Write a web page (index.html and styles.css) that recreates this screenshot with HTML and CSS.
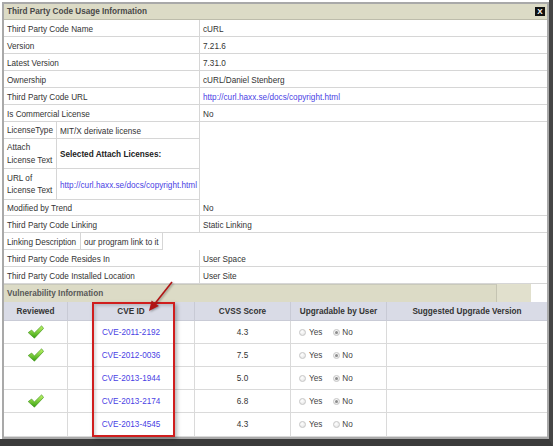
FILE: index.html
```html
<!DOCTYPE html>
<html lang="en">
<head>
    <meta charset="UTF-8">
    <title>Third Party Code Usage Information</title>
    <link rel="stylesheet" href="styles.css">
</head>
<body>
<div class="shot">
    <div class="dialog">
        <div class="titlebar">
            <span>Third Party Code Usage Information</span>
            <span class="close">X</span>
        </div>

        <div class="row"><div class="k">Third Party Code Name</div><div class="v">cURL</div></div>
        <div class="row"><div class="k">Version</div><div class="v">7.21.6</div></div>
        <div class="row"><div class="k">Latest Version</div><div class="v">7.31.0</div></div>
        <div class="row"><div class="k">Ownership</div><div class="v">cURL/Daniel Stenberg</div></div>
        <div class="row"><div class="k">Third Party Code URL</div><div class="v"><a href="#">http://curl.haxx.se/docs/copyright.html</a></div></div>
        <div class="row"><div class="k">Is Commercial License</div><div class="v">No</div></div>

        <div class="row group">
            <div class="sub">
                <div class="subrow"><div class="sk">LicenseType</div><div class="sv">MIT/X derivate license</div></div>
                <div class="subrow attach"><div class="sk">Attach<br>License Text</div><div class="sv"><b>Selected Attach Licenses:</b></div></div>
                <div class="subrow url"><div class="sk">URL of<br>License Text</div><div class="sv"><a href="#">http://curl.haxx.se/docs/copyright.html</a></div></div>
            </div>
            <div class="v"></div>
        </div>

        <div class="row short"><div class="k">Modified by Trend</div><div class="v">No</div></div>
        <div class="row"><div class="k">Third Party Code Linking</div><div class="v">Static Linking</div></div>
        <div class="row open"><div class="lk">Linking Description</div><div class="lv">our program link to it</div></div>
        <div class="row"><div class="k">Third Party Code Resides In</div><div class="v">User Space</div></div>
        <div class="row"><div class="k">Third Party Code Installed Location</div><div class="v">User Site</div></div>

        <div class="section">
            <div class="section-title">Vulnerability Information</div>
            <div class="section-tail"></div>
        </div>

        <div class="vrow vhead">
            <div>Reviewed</div>
            <div>CVE ID</div>
            <div>CVSS Score</div>
            <div>Upgradable by User</div>
            <div>Suggested Upgrade Version</div>
        </div>
        <div class="vrow">
            <div><svg class="check" viewBox="0 0 17 14"><defs><linearGradient id="g1" x1="0" y1="0" x2="0" y2="1"><stop offset="0" stop-color="#c2f76a"/><stop offset="1" stop-color="#35a00e"/></linearGradient></defs><path d="M1.2 7.6 L4.6 5 L7.4 7.9 L14.6 0.8 L16.6 3.4 L7.4 13.2 Z" fill="url(#g1)" stroke="#3d8e17" stroke-width="0.6"/></svg></div>
            <div><a href="#">CVE-2011-2192</a></div>
            <div>4.3</div>
            <div class="upg"><span class="opt"><span class="dot"></span>Yes</span><span class="opt"><span class="dot on"></span>No</span></div>
            <div></div>
        </div>
        <div class="vrow">
            <div><svg class="check" viewBox="0 0 17 14"><path d="M1.2 7.6 L4.6 5 L7.4 7.9 L14.6 0.8 L16.6 3.4 L7.4 13.2 Z" fill="url(#g1)" stroke="#3d8e17" stroke-width="0.6"/></svg></div>
            <div><a href="#">CVE-2012-0036</a></div>
            <div>7.5</div>
            <div class="upg"><span class="opt"><span class="dot"></span>Yes</span><span class="opt"><span class="dot on"></span>No</span></div>
            <div></div>
        </div>
        <div class="vrow">
            <div></div>
            <div><a href="#">CVE-2013-1944</a></div>
            <div>5.0</div>
            <div class="upg"><span class="opt"><span class="dot"></span>Yes</span><span class="opt"><span class="dot on"></span>No</span></div>
            <div></div>
        </div>
        <div class="vrow">
            <div><svg class="check" viewBox="0 0 17 14"><path d="M1.2 7.6 L4.6 5 L7.4 7.9 L14.6 0.8 L16.6 3.4 L7.4 13.2 Z" fill="url(#g1)" stroke="#3d8e17" stroke-width="0.6"/></svg></div>
            <div><a href="#">CVE-2013-2174</a></div>
            <div>6.8</div>
            <div class="upg"><span class="opt"><span class="dot"></span>Yes</span><span class="opt"><span class="dot on"></span>No</span></div>
            <div></div>
        </div>
        <div class="vrow last">
            <div></div>
            <div><a href="#">CVE-2013-4545</a></div>
            <div>4.3</div>
            <div class="upg"><span class="opt"><span class="dot"></span>Yes</span><span class="opt"><span class="dot"></span>No</span></div>
            <div></div>
        </div>

        <!-- annotation drawn over the table -->
        <div class="callout"></div>
        <svg class="arrow" viewBox="0 0 36 40">
            <line x1="28" y1="4" x2="11" y2="25.5" stroke="#b01515" stroke-width="1.6"/>
            <polygon points="5,33 14.8,28 7.6,22.4" fill="#b01515"/>
        </svg>
    </div>
</div>
</body>
</html>
```

FILE: styles.css
```css
* {
    margin: 0;
    padding: 0;
    box-sizing: border-box;
}

body {
    background: #ffffff;
    font-family: "Liberation Sans", Arial, sans-serif;
    font-size: 8.2px;
    color: #333333;
}

a {
    color: #4a3fe4;
    text-decoration: none;
}

.shot {
    display: inline-block;
    border-right: 4px solid #464646;
    border-bottom: 8px solid #3b3b3b;
}

.dialog {
    position: relative;
    width: 547px;
    margin: 2px 0 0 2px;
    border: 2px solid #a9a9a9;
    background: #ffffff;
}

.titlebar {
    display: flex;
    justify-content: space-between;
    align-items: center;
    height: 16px;
    padding-left: 3px;
    background: #dcdbc6;
    border-bottom: 1px solid #bdbcab;
    font-weight: bold;
    color: #484848;
}

.close {
    width: 10px;
    height: 9px;
    margin-right: 2px;
    background: #111111;
    color: #ffffff;
    font-size: 8px;
    line-height: 9px;
    text-align: center;
}

.row {
    display: flex;
    height: 17px;
    line-height: 19px;
    border-bottom: 1px solid #d6d6d6;
}

.k {
    width: 196px;
    padding-left: 3px;
    border-right: 1px solid #d6d6d6;
}

.v {
    flex: 1;
    padding-left: 3px;
}

.row.group {
    height: auto;
    border-bottom: 0;
}

.row.short {
    height: 16px;
    line-height: 17px;
}

.row.open {
    border-bottom: 0;
}

.sub {
    width: 196px;
    border-right: 1px solid #d6d6d6;
}

.subrow {
    display: flex;
    height: 17px;
    border-bottom: 1px solid #d6d6d6;
}

    .subrow.attach {
        height: 30px;
    }

    .subrow.url {
        height: 31px;
    }

.sk {
    display: flex;
    align-items: center;
    width: 53px;
    padding: 2px 0 0 3px;
    line-height: 12.5px;
    border-right: 1px solid #d6d6d6;
}

.sv {
    display: flex;
    align-items: center;
    flex: 1;
    padding: 2px 0 0 3px;
}

    .sv b {
        color: #222222;
    }

.lk,
.lv {
    padding-left: 3px;
    border-right: 1px solid #d6d6d6;
    border-bottom: 1px solid #d6d6d6;
}

.lk {
    width: 77px;
}

.lv {
    width: 82px;
}

.section {
    display: flex;
    height: 18px;
}

.section-title {
    width: 493px;
    padding-left: 3px;
    line-height: 18px;
    background: #dcdbc6;
    border-top: 1px solid #c9c9bb;
    border-right: 1px solid #c5c4b2;
    font-weight: bold;
    color: #585858;
}

.section-tail {
    width: 34px;
    background: #e1e0cd;
}

.vrow {
    display: grid;
    grid-template-columns: 64px 127px 96px 96px 1fr;
    height: 23px;
    border-bottom: 1px solid #dadada;
}

    .vrow > div {
        display: flex;
        align-items: center;
        justify-content: center;
        border-right: 1px solid #dadada;
    }

        .vrow > div:last-child {
            border-right: 0;
        }

    .vrow.last {
        height: 24px;
    }

.vhead {
    height: 19px;
    background: #d9dbe6;
    border-bottom-color: #c9cbd6;
    font-weight: bold;
    color: #333333;
}

    .vhead > div {
        border-right-color: #c8cad5;
    }

.vrow > .upg {
    justify-content: flex-start;
    padding-left: 8px;
    color: #444444;
}

.opt {
    display: inline-flex;
    align-items: center;
    gap: 3px;
    margin-right: 11px;
}

    .opt:last-child {
        gap: 2px;
    }

.dot {
    position: relative;
    width: 7px;
    height: 7px;
    border-radius: 50%;
    border: 1px solid #c6c6c6;
    background: radial-gradient(circle at 40% 35%, #ffffff, #e0e0e0);
}

    .dot.on::after {
        content: "";
        position: absolute;
        left: 1px;
        top: 1px;
        width: 3px;
        height: 3px;
        border-radius: 50%;
        background: #8c8c8c;
    }

.check {
    width: 17px;
    height: 14px;
}

.callout {
    position: absolute;
    left: 88px;
    top: 298px;
    width: 83px;
    height: 135px;
    border: 2px solid #d01e1e;
    box-shadow: 2px 2px 4px rgba(0, 0, 0, 0.3), inset 2px 2px 3px rgba(0, 0, 0, 0.15);
}

.arrow {
    position: absolute;
    left: 140px;
    top: 274px;
    width: 36px;
    height: 40px;
    filter: drop-shadow(1px 1px 1px rgba(0, 0, 0, 0.35));
}
```
